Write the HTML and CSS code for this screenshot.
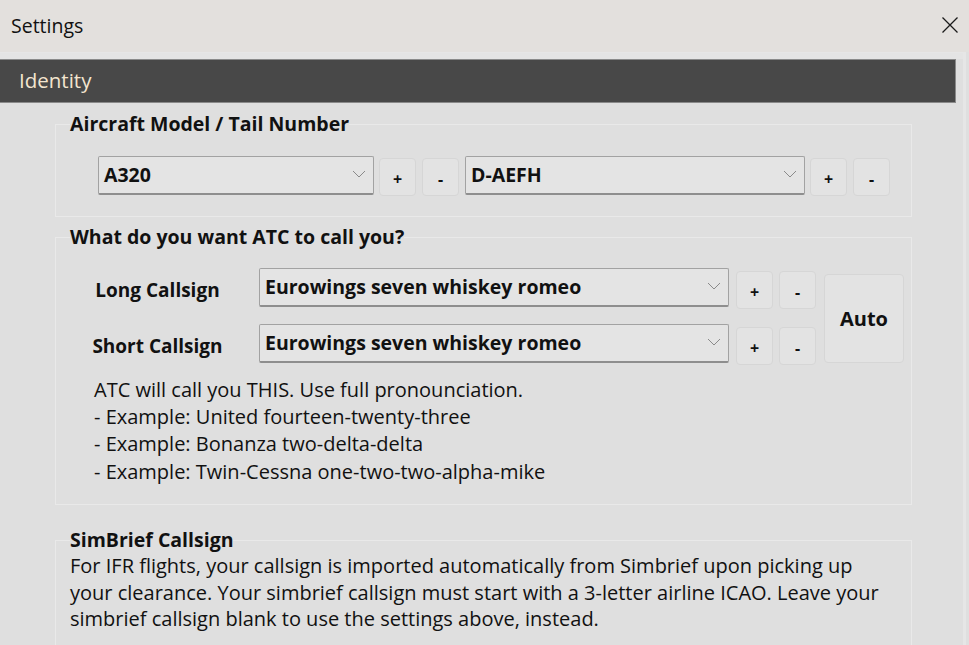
FILE: index.html
```html
<!DOCTYPE html>
<html>
<head>
<meta charset="utf-8">
<link rel="stylesheet" href="styles.css">
</head>
<body>
<div class="window">
  <div class="titlebar">
    <span class="title">Settings</span>
    <span class="close"><svg width="18" height="18" viewBox="0 0 18 18"><path d="M1.5 1.5 L16.5 16.5 M16.5 1.5 L1.5 16.5" stroke="#1a1a1a" stroke-width="1.3" fill="none"/></svg></span>
  </div>
  <div class="panel">
    <div class="section-head">Identity</div>

    <fieldset class="group g1">
      <legend>Aircraft Model / Tail Number</legend>
      <div class="row r1">
        <div class="combo c-model"><span>A320</span><svg class="chev" width="14" height="8" viewBox="0 0 14 8"><path d="M1 1 L7 7 L13 1" stroke="#8a8a8a" stroke-width="1" fill="none"/></svg></div>
        <div class="btn sm first">+</div>
        <div class="btn sm">-</div>
        <div class="combo c-tail"><span>D-AEFH</span><svg class="chev" width="14" height="8" viewBox="0 0 14 8"><path d="M1 1 L7 7 L13 1" stroke="#8a8a8a" stroke-width="1" fill="none"/></svg></div>
        <div class="btn sm first">+</div>
        <div class="btn sm">-</div>
      </div>
    </fieldset>

    <fieldset class="group g2">
      <legend>What do you want ATC to call you?</legend>
      <div class="callsigns">
        <div class="cs-rows">
          <div class="cs-row">
            <div class="lbl">Long Callsign</div>
            <div class="combo c-cs"><span>Eurowings seven whiskey romeo</span><svg class="chev" width="14" height="8" viewBox="0 0 14 8"><path d="M1 1 L7 7 L13 1" stroke="#8a8a8a" stroke-width="1" fill="none"/></svg></div>
            <div class="btn sm cs">+</div>
            <div class="btn sm cs">-</div>
          </div>
          <div class="cs-row">
            <div class="lbl">Short Callsign</div>
            <div class="combo c-cs"><span>Eurowings seven whiskey romeo</span><svg class="chev" width="14" height="8" viewBox="0 0 14 8"><path d="M1 1 L7 7 L13 1" stroke="#8a8a8a" stroke-width="1" fill="none"/></svg></div>
            <div class="btn sm cs">+</div>
            <div class="btn sm cs">-</div>
          </div>
        </div>
        <div class="btn auto">Auto</div>
      </div>
      <div class="help">
        <div>ATC will call you THIS. Use full pronounciation.</div>
        <div>- Example: United fourteen-twenty-three</div>
        <div>- Example: Bonanza two-delta-delta</div>
        <div>- Example: Twin-Cessna one-two-two-alpha-mike</div>
      </div>
    </fieldset>

    <fieldset class="group g3">
      <legend>SimBrief Callsign</legend>
      <div class="sb-text">For IFR flights, your callsign is imported automatically from Simbrief upon picking up<br>your clearance. Your simbrief callsign must start with a 3-letter airline ICAO. Leave your<br>simbrief callsign blank to use the settings above, instead.</div>
    </fieldset>
  </div>
</div>
</body>
</html>
```

FILE: styles.css
```css
html, body {
  margin: 0;
  padding: 0;
  width: 969px;
  height: 645px;
  overflow: hidden;
  background: #dfdfdf;
  font-family: "Open Sans", "Noto Sans", sans-serif;
  color: #111;
}

.window {
  width: 969px;
  height: 645px;
  display: flex;
  flex-direction: column;
}

.titlebar {
  height: 52px;
  flex: none;
  background: #e3e0dd;
  display: flex;
  align-items: center;
  justify-content: space-between;
  padding: 0 10px 2px 11px;
  box-sizing: border-box;
}

.title {
  font-size: 19.5px;
  color: #111;
  margin-top: 1px;
}

.close {
  display: flex;
  width: 18px;
  height: 18px;
}

.panel {
  flex: 1;
  background: #dfdfdf;
  border-top: 1px solid #e6e6e6;
  box-shadow: inset 0 6px 0 #e4e4e4;
  padding-top: 6px;
  border-right: 3px solid #e6e6e6;
  margin-right: 3px;
}

.section-head {
  height: 44px;
  margin-right: 7px;
  background: #484848;
  border: 1px solid #8a8a8a;
  border-left: none;
  box-sizing: border-box;
  color: #f3e5cf;
  font-size: 20.5px;
  display: flex;
  align-items: center;
  padding-left: 19px;
  padding-bottom: 2px;
}

.group {
  margin: 0 0 0 55px;
  width: 857px;
  box-sizing: border-box;
  border: 1px solid #e9e9e9;
  padding: 0;
  min-width: 0;
}

.group legend {
  font-weight: 700;
  font-size: 19.5px;
  padding: 0;
  margin-left: 14px;
  line-height: 22px;
  color: #111;
}

.g1 {
  margin-top: 10px;
  height: 104px;
}

.r1 {
  display: flex;
  align-items: flex-start;
  padding: 21px 0 0 42px;
}

.combo {
  height: 39px;
  box-sizing: border-box;
  border: 1px solid #a2a2a2;
  border-bottom: 2px solid #8e8e8e;
  border-radius: 2px;
  background: #e4e4e4;
  display: flex;
  align-items: center;
  justify-content: space-between;
  padding: 0 7px 2px 5px;
  font-weight: 700;
  font-size: 19.5px;
  flex: none;
}

.chev {
  flex: none;
}

.c-model { width: 276px; }
.c-tail { width: 340px; margin-left: 6px; }

.btn {
  box-sizing: border-box;
  border: 1px solid #d6d6d6;
  border-radius: 4px;
  background: #e3e3e3;
  display: flex;
  align-items: center;
  justify-content: center;
  font-weight: 700;
  flex: none;
}

.btn.sm {
  width: 37px;
  height: 38px;
  margin-top: 2px;
  margin-left: 6px;
  font-size: 16px;
  padding-top: 4px;
}

.btn.sm.first {
  margin-left: 5px;
}

.btn.sm.cs {
  margin-top: 3px;
}

.g2 {
  margin-top: 9px;
  height: 279px;
}

.callsigns {
  display: flex;
  align-items: flex-start;
  padding-top: 20px;
}

.cs-rows {
  display: flex;
  flex-direction: column;
  gap: 17px;
}

.cs-row {
  display: flex;
  align-items: flex-start;
  height: 39px;
}

.lbl {
  width: 203px;
  height: 39px;
  text-align: center;
  font-weight: 700;
  font-size: 19px;
  line-height: 38px;
  padding-top: 3px;
  box-sizing: border-box;
}

.c-cs {
  width: 470px;
}

.c-cs + .btn.sm {
  margin-left: 7px;
}

.btn.auto {
  width: 80px;
  height: 89px;
  margin-left: 8px;
  margin-top: 6px;
  font-size: 20px;
}

.help {
  padding: 13px 0 0 38px;
  font-size: 20px;
  line-height: 27.2px;
}

.g3 {
  margin-top: 24px;
  height: 140px;
}

.sb-text {
  padding: 2px 0 0 14px;
  font-size: 20px;
  line-height: 26.5px;
}
```
